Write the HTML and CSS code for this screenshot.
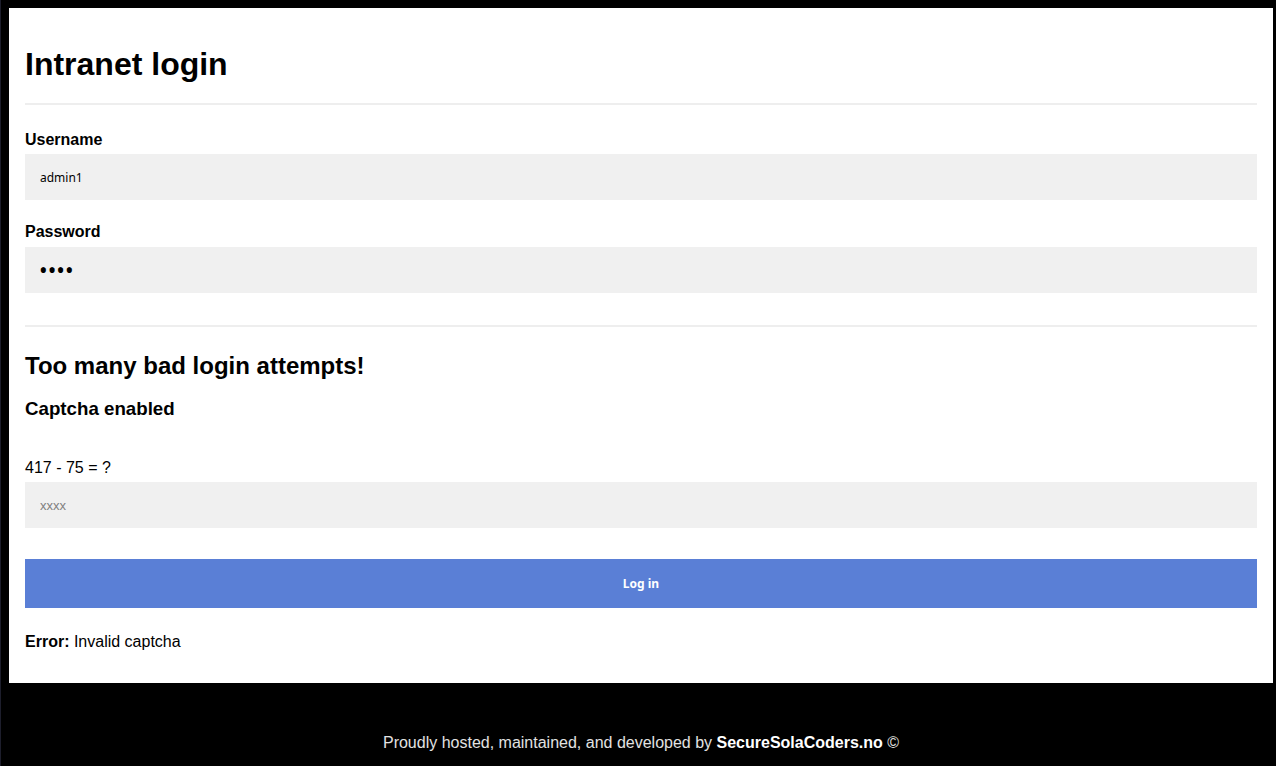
FILE: index.html
```html
<!DOCTYPE html>
<html lang="en">
<head>
<meta charset="utf-8">
<title>Intranet login</title>
<link rel="stylesheet" href="styles.css">
</head>
<body>
<main class="card">
  <h1 class="title">Intranet login</h1>
  <hr class="divider">
  <form class="login-form">
    <label class="field-label first" for="username">Username</label>
    <input class="field-input" id="username" type="text" value="admin1">
    <label class="field-label" for="password">Password</label>
    <input class="field-input password" id="password" type="password" value="1234">
    <hr class="divider second">
    <h2 class="warning">Too many bad login attempts!</h2>
    <h3 class="subwarning">Captcha enabled</h3>
    <label class="captcha-label" for="captcha">417 - 75 = ?</label>
    <input class="field-input captcha" id="captcha" type="text" placeholder="xxxx">
    <button class="submit" type="button">Log in</button>
  </form>
  <p class="error"><strong>Error:</strong> Invalid captcha</p>
</main>
<footer class="footer">Proudly hosted, maintained, and developed by <strong>SecureSolaCoders.no</strong> ©</footer>
</body>
</html>
```
FILE: styles.css
```css
html {
  background: #000;
}
body {
  margin: 0;
  border-left: 1px solid #1d1e2c;
  min-height: 766px;
  box-sizing: border-box;
  font-family: "Liberation Sans", Arial, sans-serif;
  font-size: 16px;
  color: #000;
}
.card {
  display: block;
  width: 1264px;
  margin: 8px 3px 0 8px;
  padding: 16px;
  box-sizing: border-box;
  background: #fff;
}
.title {
  margin: 22px 0 20px;
  font-size: 32px;
  line-height: 37px;
  font-weight: bold;
}
.divider {
  margin: 0;
  border: 0;
  border-top: 2px solid #eeeeee;
  height: 0;
}
.login-form {
  display: flex;
  flex-direction: column;
  margin: 0;
}
.field-label {
  display: block;
  font-weight: bold;
  margin: 23px 0 6px;
}
.field-label.first {
  margin: 26px 0 5px;
}
.field-input {
  display: block;
  height: 46px;
  box-sizing: border-box;
  width: 100%;
  margin: 0;
  border: 0;
  outline: none;
  background: #f0f0f0;
  padding: 0 15px;
  font-family: "Noto Sans", sans-serif;
  font-size: 12px;
  color: #000;
}
.field-input.password {
  font-size: 23px;
  padding-left: 14px;
}
.field-input::placeholder {
  font-family: "Liberation Sans", Arial, sans-serif;
  font-size: 13px;
  color: #808080;
}
.divider.second {
  margin-top: 32px;
}
.warning {
  margin: 25px 0 0;
  font-size: 24px;
  line-height: normal;
}
.subwarning {
  margin: 18px 0 0;
  font-size: 18.72px;
  line-height: normal;
}
.captcha-label {
  display: block;
  margin: 39px 0 5px;
}
.submit {
  display: block;
  width: 100%;
  height: 49px;
  margin: 31px 0 0;
  border: 0;
  background: #5a7fd6;
  color: #fff;
  font-family: "Noto Sans", sans-serif;
  font-weight: bold;
  font-size: 12px;
  cursor: pointer;
}
.error {
  margin: 25px 0 16px;
  line-height: normal;
}
.footer {
  width: 1264px;
  margin: 51px 0 0 8px;
  text-align: center;
  color: #e2e2e2;
}
.footer strong {
  color: #fff;
}
```
